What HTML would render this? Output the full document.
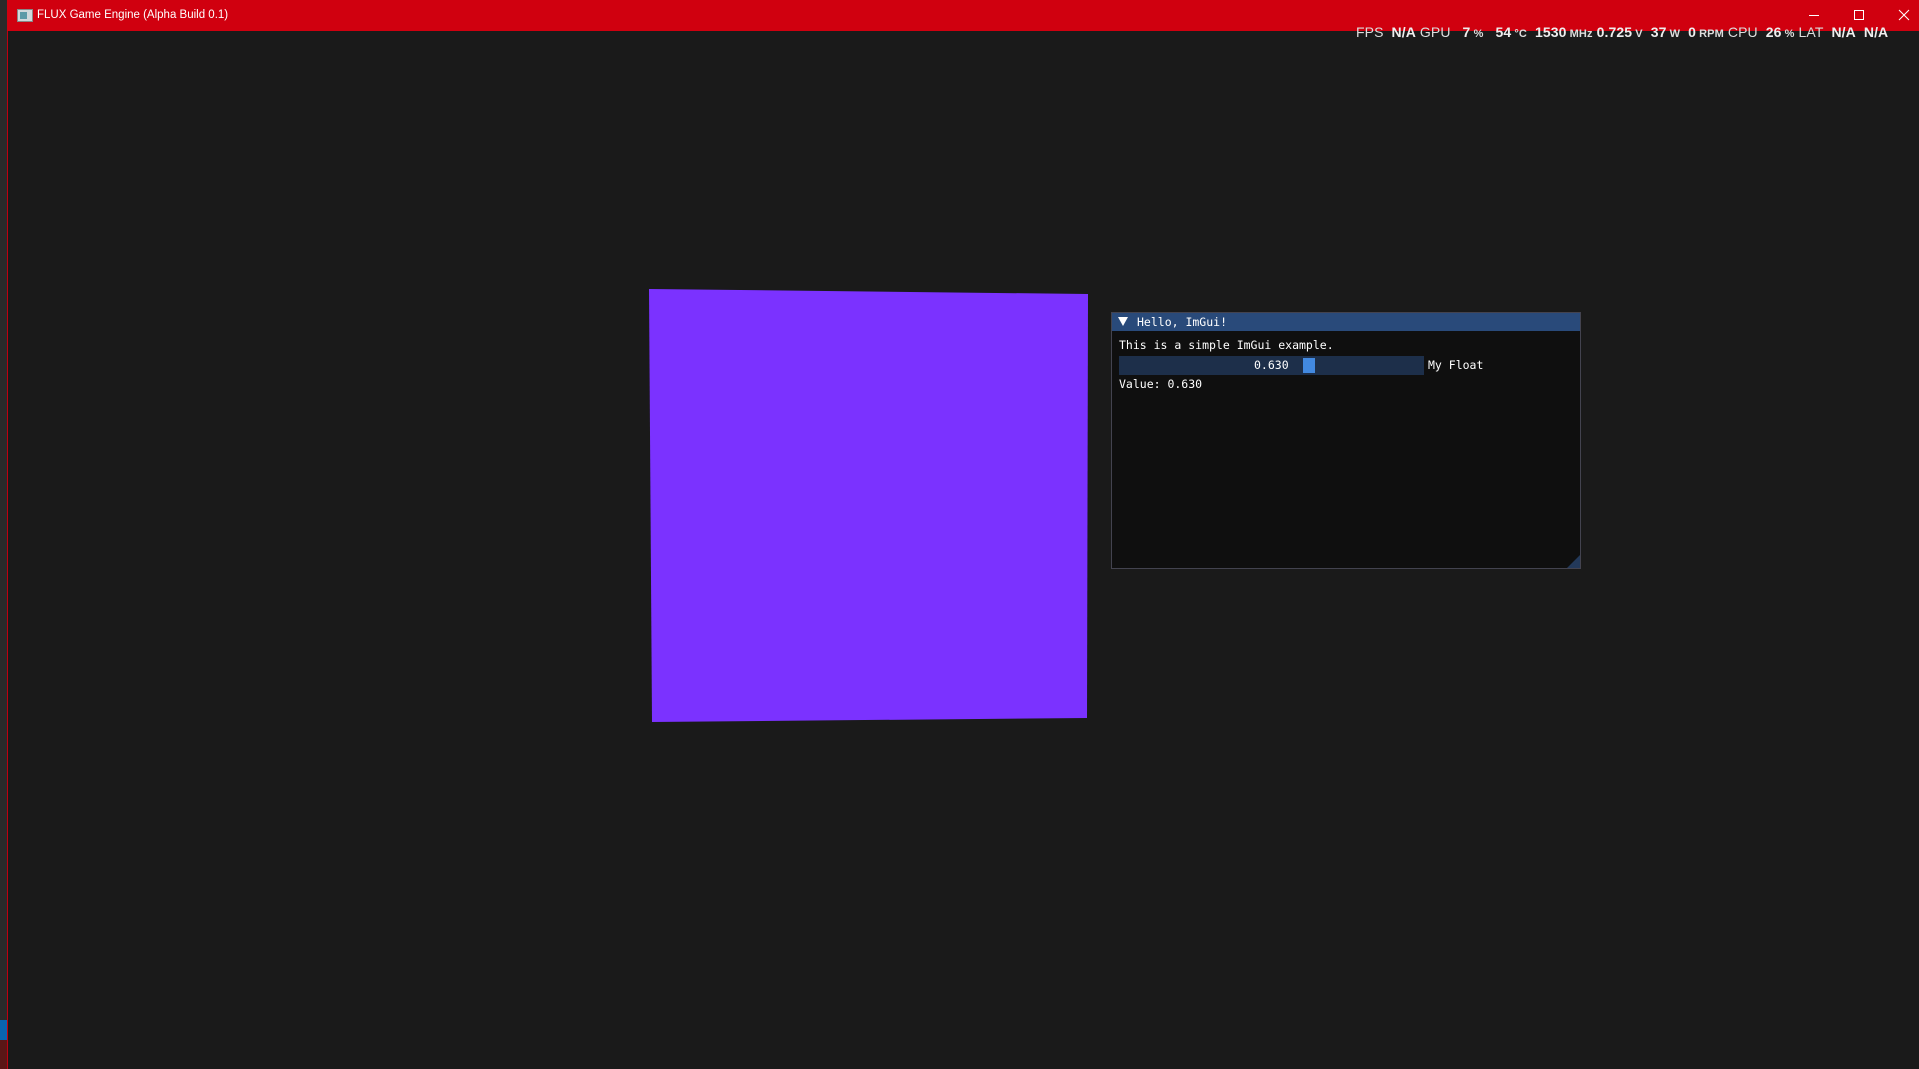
<!DOCTYPE html>
<html><head><meta charset="utf-8"><style>
html,body{margin:0;padding:0;width:1919px;height:1069px;overflow:hidden;background:#1a1a1a;font-family:"Liberation Sans",sans-serif}
#left{position:absolute;left:0;top:0;width:7px;height:1069px;background:#2a2a2a}
#leftb{position:absolute;left:7px;top:0;width:1px;height:1069px;background:#c00010}
#title{position:absolute;left:7px;top:0;width:1912px;height:31px;background:#d0000f;color:#fff;font-size:13px}
#title .t{position:absolute;left:30px;top:9px;font-family:"Liberation Sans",sans-serif;font-size:11.5px}
#icon{position:absolute;left:10px;top:9px;width:14px;height:11px;background:#cfd8dc;border:1px solid #888}
#icon:after{content:"";position:absolute;left:2px;top:2px;width:7px;height:7px;background:#5b9aa8}
#ov{position:absolute;left:1356px;top:24px;color:#ddd;font-size:14px;white-space:nowrap;letter-spacing:0.1px}
#ov b{color:#eee}
#ov small{font-size:11px;font-weight:bold}
#win{position:absolute;left:1111px;top:312px;width:468px;height:255px;background:#0f0f0f;border:1px solid #43434f;font-family:"DejaVu Sans Mono","Liberation Mono",monospace;font-size:11.5px;color:#fff}
#wt{height:18px;background:#294a7a;position:relative}
#wt span{position:absolute;left:25px;top:2px}
.tri{position:absolute;left:6px;top:4px;width:0;height:0;border-left:5px solid transparent;border-right:5px solid transparent;border-top:9px solid #fff}
#l1{position:absolute;left:7px;top:25px}
#sl{position:absolute;left:7px;top:43px;width:305px;height:19px;background:#1d2f4a}
#sl .v{position:absolute;left:135px;top:2px}
#sl .g{position:absolute;left:184px;top:2px;width:12px;height:15px;background:#4289e0}
#mf{position:absolute;left:316px;top:45px}
#l3{position:absolute;left:7px;top:64px}
#grip{position:absolute;right:0;bottom:0;width:0;height:0;border-left:13px solid transparent;border-bottom:13px solid #23395a}
</style></head><body>
<div id="left"></div><div id="leftb"></div>
<div style="position:absolute;left:0;top:1020px;width:7px;height:20px;background:#0a64b0"></div>
<div style="position:absolute;left:0;top:1040px;width:7px;height:29px;background:#5a1616"></div>
<div id="title"><div id="icon"></div><span class="t">FLUX Game Engine (Alpha Build 0.1)</span>
<svg style="position:absolute;left:1800px;top:8px" width="110" height="16">
<line x1="2" y1="7.5" x2="12" y2="7.5" stroke="#fff" stroke-width="1"/>
<rect x="47.5" y="2.5" width="9" height="9" fill="none" stroke="#fff"/>
<path d="M92 2L102 12M102 2L92 12" stroke="#fff" stroke-width="1"/>
</svg></div>
<div id="ov">FPS&nbsp; <b>N/A</b> GPU&nbsp;&nbsp; <b>7</b><small> %</small>&nbsp;&nbsp; <b>54</b><small> °C</small>&nbsp; <b>1530</b><small> MHz</small> <b>0.725</b><small> V</small>&nbsp; <b>37</b><small> W</small>&nbsp; <b>0</b><small> RPM</small> CPU&nbsp; <b>26</b><small> %</small> LAT&nbsp; <b>N/A</b>&nbsp; <b>N/A</b></div>
<svg style="position:absolute;left:0;top:0" width="1919" height="1069"><polygon points="649,289 1088,294 1087,718 652,722" fill="#7b32ff"/></svg>
<div id="win"><div id="wt"><div class="tri"></div><span>Hello, ImGui!</span></div>
<div id="l1">This is a simple ImGui example.</div>
<div id="sl"><span class="v">0.630</span><div class="g"></div></div>
<div id="mf">My Float</div>
<div id="l3">Value: 0.630</div>
<div id="grip"></div></div>
</body></html>
